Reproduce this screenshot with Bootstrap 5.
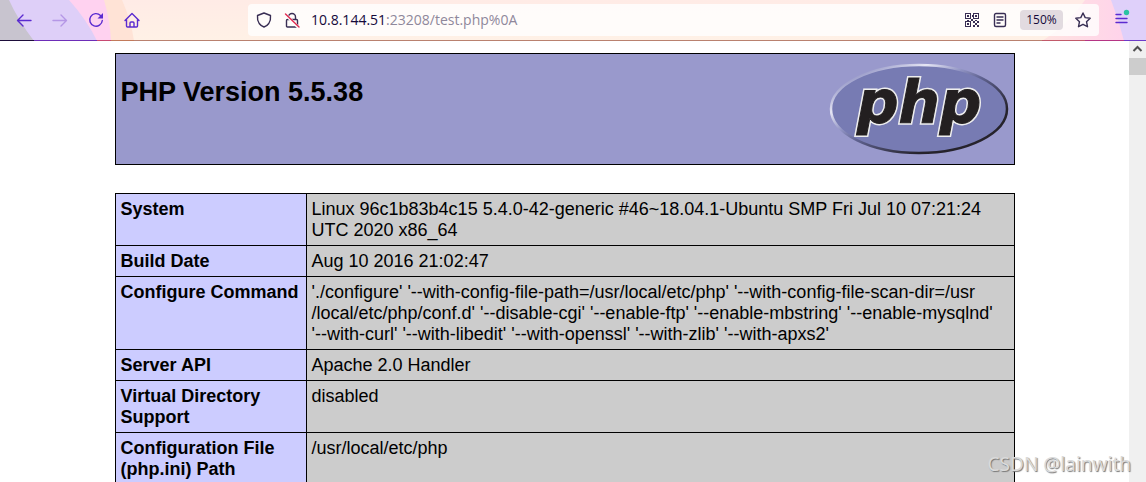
<!DOCTYPE html>
<html lang="en">
<head>
<meta charset="utf-8">
<meta name="viewport" content="width=device-width, initial-scale=1">
<title>phpinfo()</title>
<link href="https://cdn.jsdelivr.net/npm/bootstrap@5.3.0/dist/css/bootstrap.min.css" rel="stylesheet">
<style>
body{font-family:"Liberation Sans",Arial,sans-serif;font-size:18px;line-height:21px;color:#000;background:#fff}
.toolbar{height:41px;padding-left:16px;padding-right:14px;border-bottom:1px solid #b9816f;background:linear-gradient(#ffebe6,#fff1e6)}
.theme-art{top:0;height:41px}
.tool-btn{width:16px;height:16px;padding:0;border:0;background:none;color:#5b2bd0;display:flex;flex:none}
.tool-btn:disabled{color:#b597e6}
.nav-tools{gap:20px;margin-right:108px}
.urlbar{height:32px;border-radius:4px;background:rgba(255,255,255,.8);padding:0 8px;color:#392e54;margin-right:15px}
.urlbar .tool-btn{color:#392e54}
.address{font:14px/20px "Open Sans","Noto Sans",sans-serif;color:#8f889b;margin-left:11px;min-width:0}
.address strong{font-weight:400;color:#15093a}
.zoom-level{height:20px;width:43px;border:0;border-radius:4px;background:#e2dbe0;color:#15093a;font:12px/20px "Open Sans","Noto Sans",sans-serif;padding:0}
.info{width:900px;max-width:100%}
.info-head{height:112px;border:1px solid #000;background:#9999cc;padding:9px 5px 0 5px}
.info-head h1{font-size:27px;line-height:31px;font-weight:700;margin:14px 0 0}
.info-table{margin:28px 0 0;width:100%;border-collapse:collapse;table-layout:fixed}
.info-table th,.info-table td{border:1px solid #000;padding:5px 5px 4px;vertical-align:top}
.info-table th{width:191px;background:#ccccff}
.info-table td{background:#cccccc}
.scroll-rail{width:17px;background:#f0f0f0}
.scroll-thumb{height:17px;background:#cdcdcd}
.watermark{right:15px;bottom:5px;font:19px/26px "Noto Sans",sans-serif;color:#dadada;text-shadow:1px 1px 1px #777}
</style>
</head>
<body class="vh-100 overflow-hidden d-flex flex-column position-relative">
<header class="toolbar d-flex align-items-center flex-shrink-0 position-relative">
  <svg class="theme-art position-absolute start-0" width="150" height="41" aria-hidden="true">
    <path fill="#ffe3d6" d="M0 0H122Q131 20 134 41H0z"/>
    <path fill="#ffd2f0" d="M0 0H104Q110 20 111 41H0z"/><path fill="#decff8" d="M0 0H69Q87 20 97 41H0z"/><path fill="#c8c4cf" d="M0 0H9Q18 20 34 41H0z"/>
    <path fill="#c27a5a" d="M0 40H134V41H0z"/><path fill="#c74a72" d="M0 40H111V41H0z"/><path fill="#6d2db8" d="M0 40H97V41H0z"/><path fill="#1d0d3a" d="M0 40H34V41H0z"/>
  </svg>
  <svg class="theme-art position-absolute end-0" width="146" height="41" aria-hidden="true">
    <defs><linearGradient id="blush"><stop offset="0" stop-color="#ffe3e0"/><stop offset=".75" stop-color="#ffd4ea"/></linearGradient></defs>
    <path fill="url(#blush)" d="M85 0H146V41H42Q68 25 85 0z"/><path fill="#dfd0fa" d="M111 0H146V41H124Q119 20 111 0z"/>
    <path fill="#c25a6a" d="M42 40H146V41H42z"/><path fill="#b53585" d="M85 40H146V41H85z"/><path fill="#6d3bc8" d="M124 40H146V41H124z"/>
  </svg>
  <nav class="nav-tools d-flex position-relative" aria-label="Browser">
    <button class="tool-btn" aria-label="Back"><svg width="16" height="16" fill="none" stroke="currentColor" stroke-width="1.4" stroke-linecap="round" stroke-linejoin="round"><path d="M15 8.5H2M7 3 1.500 8.500 7 14"/></svg></button>
    <button class="tool-btn" aria-label="Forward" disabled><svg width="16" height="16" fill="none" stroke="currentColor" stroke-width="1.4" stroke-linecap="round" stroke-linejoin="round"><path d="M1 8.500H14M9 3l5.500 5.500L9 14"/></svg></button>
    <button class="tool-btn" aria-label="Reload"><svg width="16" height="16" fill="none" stroke="currentColor" stroke-width="1.400" stroke-linecap="round"><path d="M12.500 3.500A6.300 6.300 0 1 0 14.300 8.500"/><path fill="currentColor" stroke="none" d="M15 1v5.500H9.500z"/></svg></button>
    <button class="tool-btn" aria-label="Home"><svg width="16" height="16" fill="none" stroke="currentColor" stroke-width="1.400" stroke-linecap="round" stroke-linejoin="round"><path d="M1 8.500 8 1.500l7 7M2.500 7.500V14q0 1 1 1h9q1 0 1-1V7.500M6 15v-4q0-1 1-1h2q1 0 1 1v4"/></svg></button>
  </nav>
  <div class="urlbar flex-grow-1 d-flex align-items-center position-relative">
    <button class="tool-btn me-2" aria-label="Tracking protection"><svg width="16" height="16" fill="none" stroke="currentColor" stroke-width="1.400" stroke-linejoin="round"><path d="M8 1 14.500 3.500Q15 8 12.800 11.500 11 14 8 15 5 14 3.200 11.500 1 8 1.500 3.500z"/></svg></button>
    <button class="tool-btn ms-1" aria-label="Connection not secure"><svg width="16" height="16" fill="none" stroke="currentColor" stroke-width="1.400" stroke-linecap="round" stroke-linejoin="round"><path d="M4.500 7.500V5a3.500 3.500 0 0 1 7 0V7.500M3.500 7.500h9q1 0 1 1V14q0 1-1 1h-9q-1 0-1-1V8.500q0-1 1-1z"/><path stroke="#fffcf9" stroke-width="3" d="M2 3 14 15"/><path stroke="#e22850" d="M1.500 2 15 15"/></svg></button>
    <div class="address flex-grow-1"><strong>10.8.144.51</strong>:23208/test.php%0A</div>
    <button class="tool-btn" aria-label="QR code"><svg width="16" height="16" fill="currentColor" shape-rendering="crispEdges"><path fill-rule="evenodd" d="M1 1h6v6H1zM2 2v4h4V2zM9 1h6v6H9zM10 2v4h4V2zM1 9h6v6H1zM2 10v4h4v-4z"/><path d="M3 3h2v2H3zM11 3h2v2h-2zM3 11h2v2H3zM8 3h1v2H8zM3 8h2v1H3zM7 7h2v2H7zM11 8h2v1h-2zM9 9h2v2H9zM13 9h2v2h-2zM11 11h2v2h-2zM9 13h2v2H9zM13 13h2v2h-2z"/></svg></button>
    <button class="tool-btn mx-2 px-1 w-auto" aria-label="Reader view"><svg width="16" height="16" fill="none" stroke="currentColor" stroke-width="1.400" stroke-linecap="round"><rect x="2.500" y="1.500" width="11" height="13" rx="1.500"/><path d="M5 5h6M5 8h6M5 11h3"/></svg></button>
    <button class="zoom-level flex-shrink-0">150%</button>
    <button class="tool-btn ms-2 ps-1 w-auto" aria-label="Bookmark"><svg width="16" height="16" fill="none" stroke="currentColor" stroke-width="1.400" stroke-linejoin="round"><path d="m8 1 2.200 4.600 5 .6-3.700 3.500 1 5L8 12.300 3.500 14.700l1-5L.8 6.200l5-.6z"/></svg></button>
  </div>
  <button class="tool-btn w-auto position-relative" aria-label="Menu"><svg width="18" height="16" viewBox="0 -2 18 16" overflow="visible" fill="none" stroke="currentColor" stroke-width="1.400" stroke-linecap="round"><path d="M2 .5H7M2 4.500H13M2 8.500H13"/><circle cx="12.500" cy="-1.500" r="2.700" fill="#2ac3a2" stroke="none"/></svg></button>
</header>
<div class="d-flex flex-grow-1 overflow-hidden">
  <main class="flex-grow-1 overflow-hidden pb-3">
    <div class="info mx-auto mt-2 pt-1">
      <div class="info-head d-flex justify-content-between align-items-start">
        <h1>PHP Version 5.5.38</h1>
        <svg width="180" height="94" role="img" aria-label="PHP logo">
          <defs><linearGradient id="rim" x2="1" y2="1"><stop offset=".12" stop-color="#9496c6"/><stop offset=".27" stop-color="#e6e6f4"/><stop offset=".4" stop-color="#8f92c2"/><stop offset=".5" stop-color="#5f6290"/><stop offset=".75" stop-color="#26232c"/></linearGradient></defs>
          <ellipse cx="90" cy="46" rx="88" ry="44" fill="#777bb3" stroke="url(#rim)" stroke-width="2.500"/>
          <g font-family="DejaVu Sans" font-size="58" font-weight="700" font-style="italic" stroke-linejoin="miter">
            <text x="28" y="60" fill="#eee" stroke="#eee" stroke-width="4">php</text>
            <text x="28" y="60" fill="#231f20" stroke="#231f20" stroke-width="1">php</text>
          </g>
        </svg>
      </div>
      <table class="info-table">
        <tr><th scope="row">System</th><td>Linux 96c1b83b4c15 5.4.0-42-generic #46~18.04.1-Ubuntu SMP Fri Jul 10 07:21:24 UTC 2020 x86_64</td></tr>
        <tr><th scope="row">Build Date</th><td>Aug 10 2016 21:02:47</td></tr>
        <tr><th scope="row">Configure Command</th><td>'./configure' '--with-config-file-path=/usr/local/etc/php' '--with-config-file-scan-dir=/usr<wbr>/local/etc/php/conf.d' '--disable-cgi' '--enable-ftp' '--enable-mbstring' '--enable-mysqlnd' <span class="text-nowrap">'--with-curl'</span> '--with-libedit' '--with-openssl' '--with-zlib' '--with-apxs2'</td></tr>
        <tr><th scope="row">Server API</th><td>Apache 2.0 Handler</td></tr>
        <tr><th scope="row">Virtual Directory Support</th><td>disabled</td></tr>
        <tr><th scope="row">Configuration File (php.ini) Path</th><td>/usr/local/etc/php</td></tr>
      </table>
    </div>
  </main>
  <div class="scroll-rail flex-shrink-0" aria-hidden="true">
    <svg class="d-block" width="17" height="17" fill="none" stroke="#505050" stroke-width="2"><path d="m4.500 10 4-4 4 4"/></svg>
    <div class="scroll-thumb"></div>
  </div>
</div>
<div class="watermark position-absolute">CSDN @lainwith</div>
<script src="https://cdn.jsdelivr.net/npm/bootstrap@5.3.0/dist/js/bootstrap.bundle.min.js"></script>
</body>
</html>
